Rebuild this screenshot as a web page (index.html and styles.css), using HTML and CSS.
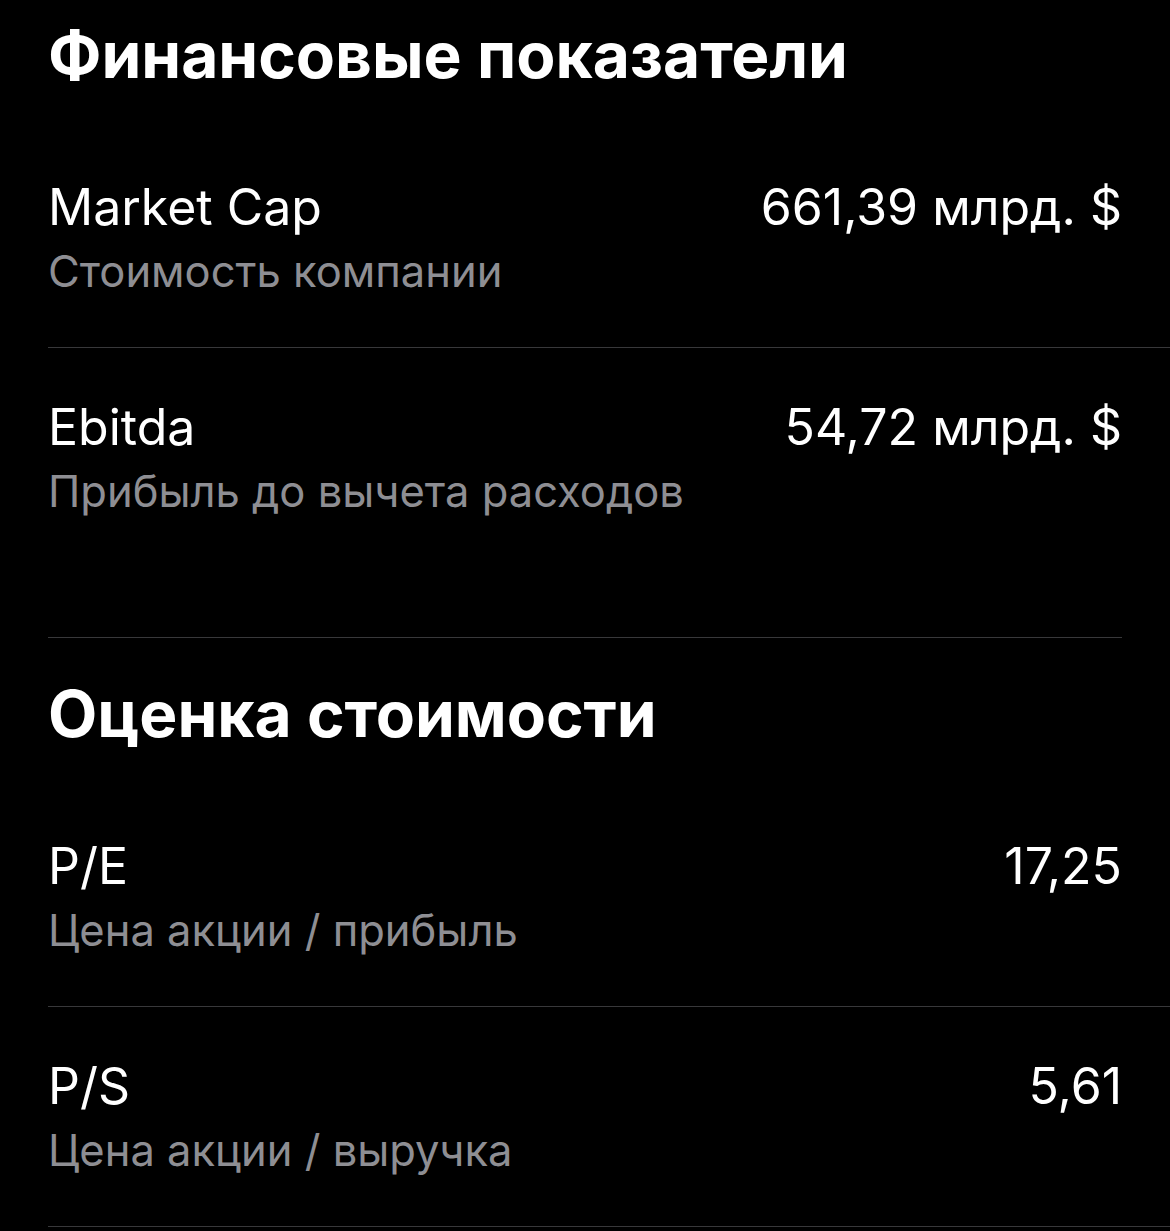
FILE: index.html
```html
<!DOCTYPE html>
<html lang="ru">
<head>
    <meta charset="UTF-8">
    <meta name="viewport" content="width=device-width, initial-scale=1.0">
    <title>Финансовые показатели</title>
    <link rel="stylesheet" href="styles.css">
</head>
<body>

    <main class="page">
        <section class="group">
            <h2 class="group-title">Финансовые показатели</h2>
            <ul class="metrics">
                <li class="metric">
                    <div class="metric-text">
                        <span class="metric-name">Market Cap</span>
                        <span class="metric-desc">Стоимость компании</span>
                    </div>
                    <span class="metric-value">661,39 млрд. $</span>
                </li>
                <li class="metric metric-last">
                    <div class="metric-text">
                        <span class="metric-name">Ebitda</span>
                        <span class="metric-desc">Прибыль до вычета расходов</span>
                    </div>
                    <span class="metric-value">54,72 млрд. $</span>
                </li>
            </ul>
            <div class="group-end"></div>
        </section>

        <section class="group">
            <h2 class="group-title">Оценка стоимости</h2>
            <ul class="metrics">
                <li class="metric">
                    <div class="metric-text">
                        <span class="metric-name">P/E</span>
                        <span class="metric-desc">Цена акции / прибыль</span>
                    </div>
                    <span class="metric-value">17,25</span>
                </li>
                <li class="metric">
                    <div class="metric-text">
                        <span class="metric-name">P/S</span>
                        <span class="metric-desc">Цена акции / выручка</span>
                    </div>
                    <span class="metric-value">5,61</span>
                </li>
            </ul>
        </section>
    </main>

</body>
</html>
```

FILE: styles.css
```css
body {
    font-family: Inter, "Noto Sans", sans-serif;
    background-color: #000;
    color: #fff;
    margin: 0;
}
.page {
    padding-top: 19px;
}
.group-title {
    margin: 0 48px 37px;
    font-size: 64px;
    line-height: 72px;
    font-weight: 700;
}
.metrics {
    list-style: none;
    margin: 0;
    padding: 0;
}
.metric {
    display: flex;
    justify-content: space-between;
    align-items: flex-start;
    margin-left: 48px;
    padding: 51px 48px 40px 0;
    border-bottom: 1px solid #38383a;
}
.metric-last {
    border-bottom: none;
    padding-bottom: 110px;
}
.metric-name,
.metric-value {
    display: block;
    font-size: 50px;
    line-height: 56px;
}
.metric-desc {
    display: block;
    font-size: 43.5px;
    line-height: 72px;
    color: #8e8e93;
}
.group-end {
    height: 1px;
    margin: 0 48px 40px;
    background: #38383a;
}
```
